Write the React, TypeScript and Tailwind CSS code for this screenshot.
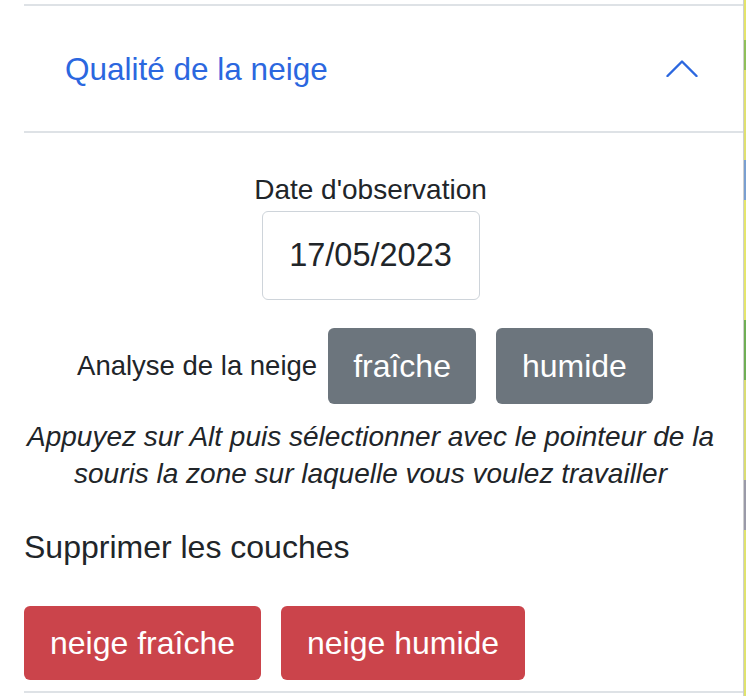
export default function App() {
  return (
    <div className="flex h-[696px] w-[746px] overflow-hidden bg-white font-['Liberation_Sans',Arial,sans-serif] text-[#212529]">
      <div className="flex-1 pl-6 pt-1">
        <div className="border-y-2 border-[#dee2e6]">
          <button className="flex h-[125px] w-full items-center justify-between pl-[41px] pr-[45px] pt-[3px] text-left text-[31.5px] text-[#2b67df]">
            <span>Qualité de la neige</span>
            <svg width="32" height="17" viewBox="0 0 32 17" fill="none" className="mb-[3px]">
              <path d="M1.5 16 L16 1.5 L30.5 16" stroke="#2b67df" strokeWidth="2.4" strokeLinecap="round" strokeLinejoin="round" />
            </svg>
          </button>

          <div className="border-t-2 border-[#dee2e6] pb-[11px] pr-[26px] pt-[38px]">
            <div className="flex flex-col items-center">
              <label className="text-[28px] leading-[37px]">Date d'observation</label>
              <input
                type="text"
                defaultValue="17/05/2023"
                className="mt-[3px] h-[89px] w-[218px] rounded-[6px] border-[1.5px] border-[#ced4da] text-center text-[32.5px] text-[#212529] outline-none"
              />
            </div>

            <div className="mt-[28px] flex items-center justify-center gap-5 pr-[11px]">
              <span className="mr-[-9px] text-[27.5px]">Analyse de la neige</span>
              <button className="h-[76px] rounded-[6px] bg-[#6c757d] px-[25px] text-[32px] text-white">fraîche</button>
              <button className="h-[76px] rounded-[6px] bg-[#6c757d] px-[26px] text-[32px] text-white">humide</button>
            </div>

            <p className="mt-[14px] text-center text-[28px] italic leading-[37px]">
              Appuyez sur Alt puis sélectionner avec le pointeur de la souris la zone sur laquelle vous voulez travailler
            </p>

            <h5 className="mt-[36px] text-[32px] leading-[38px]">Supprimer les couches</h5>

            <div className="mt-[40px] flex gap-5">
              <button className="h-[74px] rounded-[6px] bg-[#cb444b] px-[26px] text-[32px] text-white">neige fraîche</button>
              <button className="h-[74px] rounded-[6px] bg-[#cb444b] px-[26px] text-[32px] text-white">neige humide</button>
            </div>
          </div>
        </div>
      </div>

      <div className="flex w-[3px] flex-col border-l border-[#cfcfcf]">
        <div className="h-[40px] bg-[#e3e36a]" />
        <div className="h-[30px] bg-[#8fbf5a]" />
        <div className="h-[90px] bg-[#dfe070]" />
        <div className="h-[40px] bg-[#7a9fd0]" />
        <div className="h-[120px] bg-[#e4e56c]" />
        <div className="h-[60px] bg-[#6fae55]" />
        <div className="h-[100px] bg-[#d9dc72]" />
        <div className="h-[50px] bg-[#9a9aa8]" />
        <div className="flex-1 bg-[#dfe26e]" />
      </div>
    </div>
  );
}
